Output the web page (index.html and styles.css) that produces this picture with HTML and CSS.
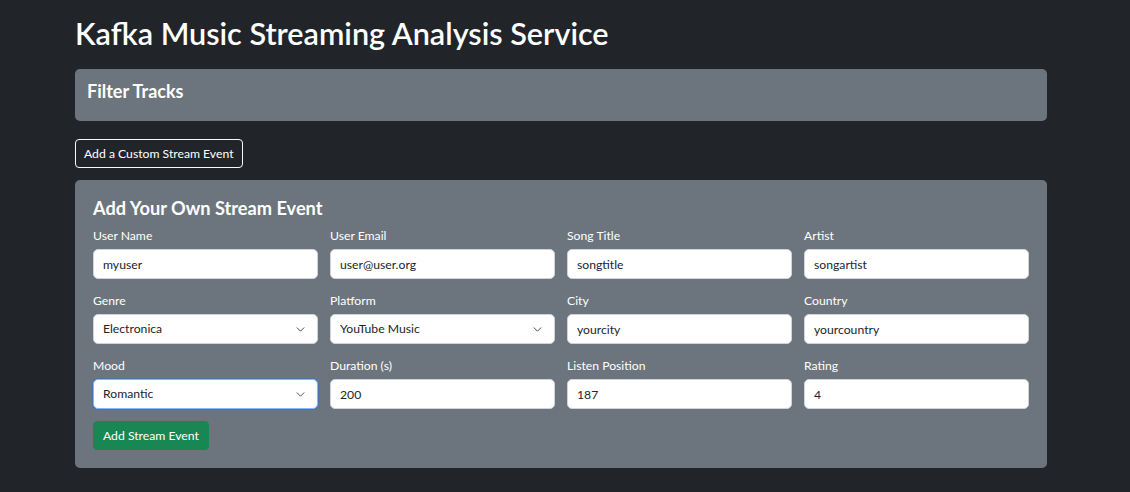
FILE: index.html
```html
<!DOCTYPE html>
<html lang="en">
<head>
<meta charset="utf-8">
<title>Kafka Music Streaming Analysis Service</title>
<link rel="stylesheet" href="styles.css">
</head>
<body>
<main class="container">
  <h2 class="page-title">Kafka Music Streaming Analysis Service</h2>

  <section class="panel filter-panel">
    <h5 class="panel-title">Filter Tracks</h5>
  </section>

  <button class="btn-outline" type="button">Add a Custom Stream Event</button>

  <section class="panel form-panel">
    <h4 class="form-title">Add Your Own Stream Event</h4>
    <form class="event-form">
      <div class="field">
        <label>User Name</label>
        <input class="control" type="text" value="myuser">
      </div>
      <div class="field">
        <label>User Email</label>
        <input class="control" type="text" value="user@user.org">
      </div>
      <div class="field">
        <label>Song Title</label>
        <input class="control" type="text" value="songtitle">
      </div>
      <div class="field">
        <label>Artist</label>
        <input class="control" type="text" value="songartist">
      </div>

      <div class="field">
        <label>Genre</label>
        <select class="control select"><option>Electronica</option></select>
      </div>
      <div class="field">
        <label>Platform</label>
        <select class="control select"><option>YouTube Music</option></select>
      </div>
      <div class="field">
        <label>City</label>
        <input class="control" type="text" value="yourcity">
      </div>
      <div class="field">
        <label>Country</label>
        <input class="control" type="text" value="yourcountry">
      </div>

      <div class="field">
        <label>Mood</label>
        <select class="control select focused"><option>Romantic</option></select>
      </div>
      <div class="field">
        <label>Duration (s)</label>
        <input class="control" type="text" value="200">
      </div>
      <div class="field">
        <label>Listen Position</label>
        <input class="control" type="text" value="187">
      </div>
      <div class="field">
        <label>Rating</label>
        <input class="control" type="text" value="4">
      </div>

      <div class="actions">
        <button class="btn-success" type="button">Add Stream Event</button>
      </div>
    </form>
  </section>
</main>
</body>
</html>
```

FILE: styles.css
```css
* { box-sizing: border-box; }

html, body {
  margin: 0;
  padding: 0;
  background: #212529;
}

body {
  font-family: Lato, "Noto Sans", "Liberation Sans", sans-serif;
  color: #fff;
}

.container {
  width: 972px;
  margin: 0 0 0 75px;
  padding-top: 15px;
  padding-bottom: 25px;
}

.page-title {
  margin: 0 0 16px 0;
  font-size: 30.6px;
  line-height: 38px;
  font-weight: 600;
}

.panel {
  background: #6c757d;
  border-radius: 5px;
}

.filter-panel {
  height: 52px;
  padding: 10px 12px;
}

.panel-title {
  margin: 0;
  font-size: 18px;
  line-height: 24px;
  font-weight: 700;
}

.btn-outline {
  display: block;
  margin: 18px 0 12px 0;
  height: 29px;
  padding: 0 8px;
  background: transparent;
  color: #fff;
  border: 1px solid #f8f9fa;
  border-radius: 4px;
  font-family: inherit;
  font-size: 12.2px;
  line-height: 27px;
}

.form-panel {
  padding: 17px 18px 18px 18px;
}

.form-title {
  margin: 0 0 6px 0;
  font-size: 18.2px;
  line-height: 23px;
  font-weight: 700;
}

.event-form {
  display: grid;
  grid-template-columns: repeat(4, 225px);
  column-gap: 12px;
  row-gap: 12px;
}

.field {
  display: flex;
  flex-direction: column;
}

.field label {
  font-size: 12.2px;
  line-height: 19px;
  margin-bottom: 4px;
}

.control {
  width: 100%;
  height: 30px;
  margin: 0;
  padding: 0 9px;
  border: 1px solid #ced4da;
  border-radius: 5px;
  background-color: #fff;
  color: #212529;
  font-family: inherit;
  font-size: 12.2px;
  line-height: 28px;
  outline: none;
}

.select {
  -webkit-appearance: none;
  appearance: none;
  padding-right: 30px;
  background-image: url("data:image/svg+xml,%3csvg xmlns='http://www.w3.org/2000/svg' viewBox='0 0 16 16'%3e%3cpath fill='none' stroke='%23343a40' stroke-linecap='round' stroke-linejoin='round' stroke-width='1.6' d='M2 5l6 6 6-6'/%3e%3c/svg%3e");
  background-repeat: no-repeat;
  background-position: right 12px center;
  background-size: 9px 9px;
}

.focused {
  border-color: #86b7fe;
  box-shadow: 0 0 0 1px rgba(60, 110, 200, 0.6);
}

.actions {
  grid-column: 1 / -1;
}

.btn-success {
  height: 29px;
  padding: 0 9px;
  background: #198754;
  color: #fff;
  border: 1px solid #198754;
  border-radius: 4px;
  font-family: inherit;
  font-size: 12.2px;
  line-height: 27px;
}
```
